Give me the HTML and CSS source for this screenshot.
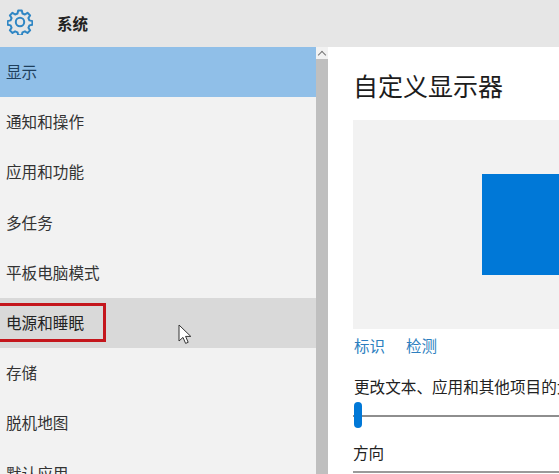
FILE: index.html
```html
<!DOCTYPE html>
<html lang="zh-CN">
<head>
<meta charset="utf-8">
<title>系统</title>
<link rel="stylesheet" href="styles.css">
</head>
<body>
<div class="window">
  <header class="topbar">
    <svg class="gear" viewBox="0 0 26 26" width="26" height="26" aria-hidden="true">
      <path d="M11.2 1.5h3.6l.7 3 2.4 1 2.6-1.7 2.6 2.6-1.7 2.6 1 2.4 3 .7v3.6l-3 .7-1 2.4 1.7 2.6-2.6 2.6-2.6-1.7-2.4 1-.7 3h-3.6l-.7-3-2.4-1-2.6 1.7-2.6-2.6 1.7-2.6-1-2.4-3-.7v-3.6l3-.7 1-2.4-1.7-2.6 2.6-2.6 2.6 1.7 2.4-1z"/>
      <circle cx="13" cy="13" r="4.2"/>
    </svg>
    <span class="topbar-title">系统</span>
  </header>
  <div class="body">
    <nav class="nav">
      <div class="nav-item selected">显示</div>
      <div class="nav-item">通知和操作</div>
      <div class="nav-item">应用和功能</div>
      <div class="nav-item">多任务</div>
      <div class="nav-item">平板电脑模式</div>
      <div class="nav-item hover">电源和睡眠
        <span class="highlight"></span>
        <svg class="cursor" viewBox="0 0 14 22" width="14" height="22" aria-hidden="true">
          <path d="M1 1v16l4-3.6 2.6 6 2.6-1.1-2.6-5.9h5.2z"/>
        </svg>
      </div>
      <div class="nav-item">存储</div>
      <div class="nav-item">脱机地图</div>
      <div class="nav-item">默认应用</div>
    </nav>
    <div class="scrollbar"><span class="scroll-up"></span><span class="scroll-thumb"></span></div>
    <main class="content">
      <h1 class="title">自定义显示器</h1>
      <div class="preview"><div class="monitor"></div></div>
      <div class="links"><a>标识</a><a>检测</a></div>
      <p class="label scale-label">更改文本、应用和其他项目的大小：100%（推荐）</p>
      <div class="slider"><span class="thumb"></span></div>
      <p class="label orientation">方向</p>
      <div class="select-top"></div>
    </main>
  </div>
</div>
</body>
</html>
```
FILE: styles.css
```css
* { box-sizing: border-box; }
html, body { margin: 0; height: 100%; overflow: hidden; background: #fff; }
body { font-family: "Noto Sans CJK SC", "Liberation Sans", sans-serif; color: #222; }
.window { width: 559px; height: 474px; display: flex; flex-direction: column; overflow: hidden; }
.topbar { height: 47px; flex: none; background: #e6e6e6; display: flex; align-items: center; padding-left: 6px; }
.gear { fill: none; stroke: #2f86c4; stroke-width: 2; stroke-linejoin: round; margin-bottom: 4px; margin-left: 1px; }
.topbar-title { margin-left: 24px; font-size: 15.5px; font-weight: 700; color: #222; margin-bottom: 2px; }
.body { flex: 1; display: flex; min-height: 0; }
.nav { width: 316px; flex: none; background: #f2f2f2; }
.nav-item { position: relative; height: 50.2px; display: flex; align-items: center; padding-left: 6px; padding-bottom: 2px; font-size: 15.6px; color: #333; }
.nav-item.selected { background: #90bfe8; color: #1f3f5c; }
.nav-item.hover { background: #d9d9d9; color: #222; }
.highlight { position: absolute; left: -4px; top: 5px; width: 110px; height: 39px; border: 3px solid #c4161c; }
.cursor { position: absolute; left: 178px; top: 26px; fill: #fff; stroke: #333; stroke-width: 1; }
.scrollbar { width: 12px; flex: none; background: #bfbfbf; position: relative; }
.scroll-up { display: block; height: 12px; background: #f2f2f2; position: relative; }
.scroll-up::after { content: ""; position: absolute; left: 3px; top: 5px; width: 5px; height: 5px; border-left: 1px solid #777; border-top: 1px solid #777; transform: rotate(45deg); }
.scroll-thumb { display: block; }
.content { flex: 1; min-width: 0; overflow: hidden; background: #fff; padding: 19px 0 0 25px; }
.title { margin: 0; font-size: 25px; line-height: 38px; font-weight: 400; color: #1c1c1c; white-space: nowrap; }
.preview { margin-top: 16px; height: 209px; background: #f2f2f2; padding: 54px 0 0 129px; }
.monitor { width: 100%; height: 101px; background: #0078d7; }
.links { display: flex; gap: 21px; margin-top: 5px; height: 22px; align-items: center; margin-left: 1px; font-size: 15.5px; color: #2d7fc0; }
.label { margin: 0 0 0 1px; font-size: 15.6px; line-height: 22px; color: #222; white-space: nowrap; }
.scale-label { margin-top: 19px; }
.slider { position: relative; height: 2px; margin-top: 18px; background: #8e8e8e; }
.thumb { position: absolute; left: 1px; top: -13px; width: 8px; height: 26px; border-radius: 4px; background: #0078d7; }
.orientation { margin: 24px 0 0; }
.select-top { height: 2px; margin-top: 8px; background: #9a9a9a; }
```
